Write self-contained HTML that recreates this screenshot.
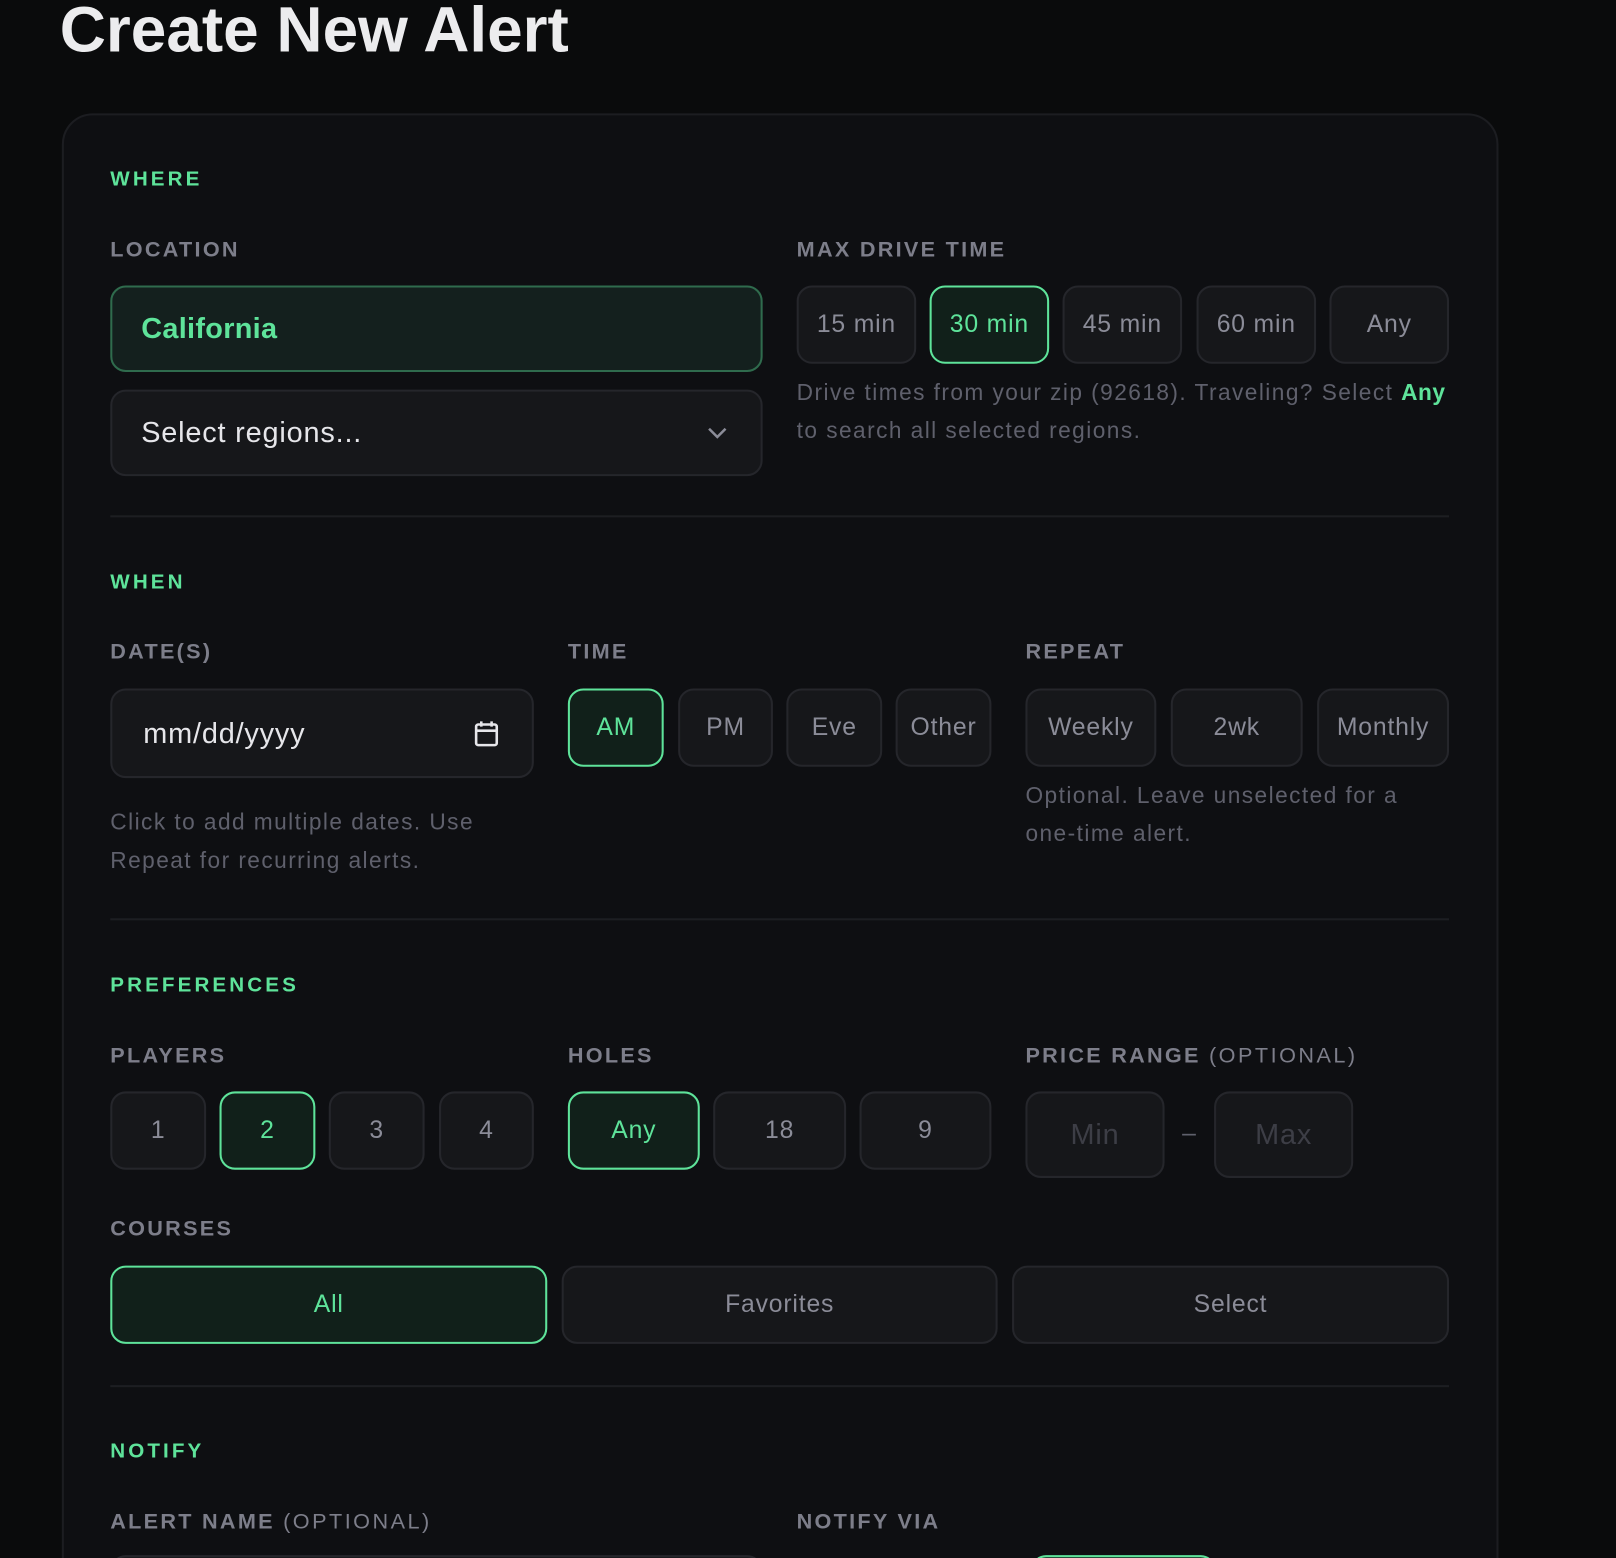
<!DOCTYPE html>
<html><head><meta charset="utf-8"><style>
*{box-sizing:border-box;margin:0;padding:0}
html,body{width:1616px;height:1558px;overflow:hidden;background:#0a0b0c;font-family:"Liberation Sans",sans-serif}
#w{position:absolute;left:0;top:0;width:1568px;height:1512px;overflow:hidden;transform:scale(1.0306);transform-origin:0 0}
.a{position:absolute}
h1{position:absolute;left:58px;top:-6px;font-size:62px;font-weight:bold;color:#ececee;letter-spacing:0px}
.card{position:absolute;left:60px;top:110px;width:1394px;height:1500px;background:#0e0f12;border:2px solid #1c1d21;border-radius:30px}
.sec{position:absolute;left:107px;font-size:20px;font-weight:bold;color:#5ee39a;letter-spacing:3px}
.lbl{position:absolute;font-size:21px;font-weight:bold;color:#7d7e8a;letter-spacing:2.2px}
.lbl span{font-weight:normal;letter-spacing:2.4px}
.b{position:absolute;background:#16171a;border:2px solid #25262b;border-radius:15px;color:#8b8c98;font-size:24px;letter-spacing:.8px;display:flex;align-items:center;justify-content:center}
.s{background:#11201a;border-color:#5ee39a;color:#5ee39a}
.help{position:absolute;font-size:22px;color:#5f606c;line-height:37px;letter-spacing:1.4px}
.div{position:absolute;left:107px;width:1299px;height:2px;background:#1d1e22}
</style></head><body><div id="w">
<h1>Create New Alert</h1>
<div class="card"></div>
<div class="sec" style="top:163px">WHERE</div>
<div class="lbl" style="left:107px;top:231px">LOCATION</div>
<div class="b s" style="left:107px;top:277px;width:633px;height:84px;justify-content:flex-start;padding-left:28px;font-weight:bold;font-size:28px;letter-spacing:.3px;background:#14201e;border-color:#2f6b4d">California</div>
<div class="b" style="left:107px;top:378px;width:633px;height:84px;justify-content:space-between;padding:0 32px 0 28px;font-size:28px;color:#e6e6ea"><span>Select regions...</span><svg width="20" height="12" viewBox="0 0 20 12"><path d="M2 2l8 8 8-8" stroke="#8b8c98" stroke-width="2.5" fill="none"/></svg></div>
<div class="lbl" style="left:773px;top:231px">MAX DRIVE TIME</div>
<div class="b" style="left:773px;top:277px;width:116px;height:76px">15 min</div>
<div class="b s" style="left:902px;top:277px;width:116px;height:76px">30 min</div>
<div class="b" style="left:1031px;top:277px;width:116px;height:76px">45 min</div>
<div class="b" style="left:1161px;top:277px;width:116px;height:76px">60 min</div>
<div class="b" style="left:1290px;top:277px;width:116px;height:76px">Any</div>
<div class="help" style="left:773px;top:362px;width:700px">Drive times from your zip (92618). Traveling? Select <b style="color:#5ee39a;letter-spacing:.5px">Any</b><br>to search all selected regions.</div>
<div class="div" style="top:500px"></div>
<div class="sec" style="top:554px">WHEN</div>
<div class="lbl" style="left:107px;top:621px">DATE(S)</div>
<div class="b" style="left:107px;top:668px;width:411px;height:87px;justify-content:space-between;padding:0 32px 0 30px;font-size:28px;color:#e6e6ea"><span>mm/dd/yyyy</span><svg width="24" height="26" viewBox="0 0 24 26"><rect x="2" y="4" width="20" height="20" rx="2" stroke="#e6e6ea" stroke-width="2.5" fill="none"/><path d="M2 10h20M7 1v5M17 1v5" stroke="#e6e6ea" stroke-width="2.5"/></svg></div>
<div class="help" style="left:107px;top:779px">Click to add multiple dates. Use<br>Repeat for recurring alerts.</div>
<div class="lbl" style="left:551px;top:621px">TIME</div>
<div class="b s" style="left:551px;top:668px;width:93px;height:76px">AM</div>
<div class="b" style="left:658px;top:668px;width:92px;height:76px">PM</div>
<div class="b" style="left:763px;top:668px;width:93px;height:76px">Eve</div>
<div class="b" style="left:869px;top:668px;width:93px;height:76px">Other</div>
<div class="lbl" style="left:995px;top:621px">REPEAT</div>
<div class="b" style="left:995px;top:668px;width:127px;height:76px">Weekly</div>
<div class="b" style="left:1136px;top:668px;width:128px;height:76px">2wk</div>
<div class="b" style="left:1278px;top:668px;width:128px;height:76px">Monthly</div>
<div class="help" style="left:995px;top:753px">Optional. Leave unselected for a<br>one-time alert.</div>
<div class="div" style="top:891px"></div>
<div class="sec" style="top:945px">PREFERENCES</div>
<div class="lbl" style="left:107px;top:1013px">PLAYERS</div>
<div class="b" style="left:107px;top:1059px;width:93px;height:76px">1</div>
<div class="b s" style="left:213px;top:1059px;width:93px;height:76px">2</div>
<div class="b" style="left:319px;top:1059px;width:93px;height:76px">3</div>
<div class="b" style="left:426px;top:1059px;width:92px;height:76px">4</div>
<div class="lbl" style="left:551px;top:1013px">HOLES</div>
<div class="b s" style="left:551px;top:1059px;width:128px;height:76px">Any</div>
<div class="b" style="left:692px;top:1059px;width:129px;height:76px">18</div>
<div class="b" style="left:834px;top:1059px;width:128px;height:76px">9</div>
<div class="lbl" style="left:995px;top:1013px">PRICE RANGE <span>(OPTIONAL)</span></div>
<div class="b" style="left:995px;top:1059px;width:135px;height:84px;font-size:28px;color:#3d3e46">Min</div>
<div class="a" style="left:1147px;top:1086px;font-size:24px;color:#5f606c">–</div>
<div class="b" style="left:1178px;top:1059px;width:135px;height:84px;font-size:28px;color:#3d3e46">Max</div>
<div class="lbl" style="left:107px;top:1181px">COURSES</div>
<div class="b s" style="left:107px;top:1228px;width:424px;height:76px">All</div>
<div class="b" style="left:545px;top:1228px;width:423px;height:76px">Favorites</div>
<div class="b" style="left:982px;top:1228px;width:424px;height:76px">Select</div>
<div class="div" style="top:1344px"></div>
<div class="sec" style="top:1397px">NOTIFY</div>
<div class="lbl" style="left:107px;top:1465px">ALERT NAME <span>(OPTIONAL)</span></div>
<div class="lbl" style="left:773px;top:1465px">NOTIFY VIA</div>
<div class="a" style="left:107px;top:1509px;width:633px;height:80px;border:2px solid #25262b;border-radius:15px;background:#16171a"></div>
<div class="a" style="left:1000px;top:1509px;width:180px;height:80px;border:2px solid #5ee39a;border-radius:15px;background:#11201a"></div>
</div></body></html>
